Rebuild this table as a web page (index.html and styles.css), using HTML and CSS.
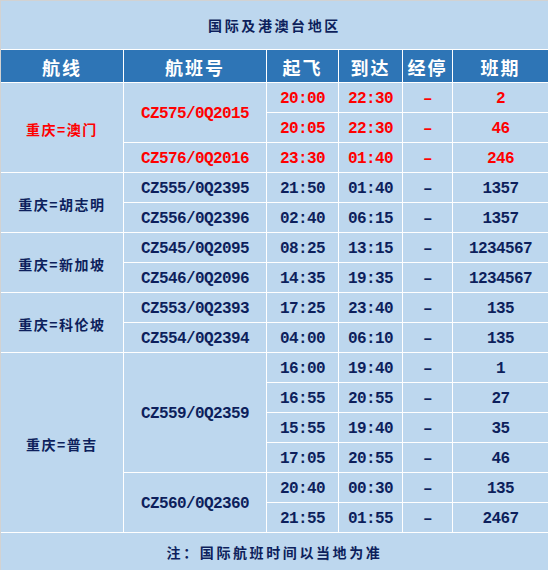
FILE: index.html
```html
<!DOCTYPE html>
<html lang="zh-CN">
<head>
<meta charset="utf-8">
<title>国际及港澳台地区</title>
<link rel="stylesheet" href="styles.css">
</head>
<body>
<div class="frame">
  <div class="sheet">
    <div class="title">国际及港澳台地区</div>

    <div class="hd">航线</div>
    <div class="hd">航班号</div>
    <div class="hd">起飞</div>
    <div class="hd">到达</div>
    <div class="hd">经停</div>
    <div class="hd">班期</div>

    <div class="route red span3">重庆=澳门</div>
    <div class="code red span2">CZ575/0Q2015</div>
    <div class="num red">20:00</div><div class="num red">22:30</div><div class="num red">–</div><div class="num red">2</div>
    <div class="num red">20:05</div><div class="num red">22:30</div><div class="num red">–</div><div class="num red">46</div>
    <div class="code red">CZ576/0Q2016</div>
    <div class="num red">23:30</div><div class="num red">01:40</div><div class="num red">–</div><div class="num red">246</div>

    <div class="route span2">重庆=胡志明</div>
    <div class="code">CZ555/0Q2395</div>
    <div class="num">21:50</div><div class="num">01:40</div><div class="num">–</div><div class="num">1357</div>
    <div class="code">CZ556/0Q2396</div>
    <div class="num">02:40</div><div class="num">06:15</div><div class="num">–</div><div class="num">1357</div>

    <div class="route span2">重庆=新加坡</div>
    <div class="code">CZ545/0Q2095</div>
    <div class="num">08:25</div><div class="num">13:15</div><div class="num">–</div><div class="num">1234567</div>
    <div class="code">CZ546/0Q2096</div>
    <div class="num">14:35</div><div class="num">19:35</div><div class="num">–</div><div class="num">1234567</div>

    <div class="route span2">重庆=科伦坡</div>
    <div class="code">CZ553/0Q2393</div>
    <div class="num">17:25</div><div class="num">23:40</div><div class="num">–</div><div class="num">135</div>
    <div class="code">CZ554/0Q2394</div>
    <div class="num">04:00</div><div class="num">06:10</div><div class="num">–</div><div class="num">135</div>

    <div class="route span6">重庆=普吉</div>
    <div class="code span4">CZ559/0Q2359</div>
    <div class="num">16:00</div><div class="num">19:40</div><div class="num">–</div><div class="num">1</div>
    <div class="num">16:55</div><div class="num">20:55</div><div class="num">–</div><div class="num">27</div>
    <div class="num">15:55</div><div class="num">19:40</div><div class="num">–</div><div class="num">35</div>
    <div class="num">17:05</div><div class="num">20:55</div><div class="num">–</div><div class="num">46</div>
    <div class="code span2">CZ560/0Q2360</div>
    <div class="num">20:40</div><div class="num">00:30</div><div class="num">–</div><div class="num">135</div>
    <div class="num">21:55</div><div class="num">01:55</div><div class="num">–</div><div class="num">2467</div>

    <div class="note">注：国际航班时间以当地为准</div>
  </div>
</div>
</body>
</html>
```

FILE: styles.css
```css
html, body {
  margin: 0;
  padding: 0;
  background: #bdd7ee;
}

.frame {
  width: 547px;
  height: 569px;
  border-left: 1px solid #d2d2d2;
  border-top: 1px solid #d2d2d2;
  overflow: hidden;
}

.sheet {
  display: grid;
  grid-template-columns: 122px 142px 71px 63px 49px 95px;
  grid-template-rows: 48px 32px repeat(15, 29px) 37px;
  gap: 1px;
  background: #ffffff;
  color: #0d1f5c;
  font-family: "Noto Sans CJK SC", "Liberation Sans", sans-serif;
}

.sheet > div {
  background: #bdd7ee;
  display: flex;
  align-items: center;
  justify-content: center;
  white-space: nowrap;
}

.title,
.note {
  grid-column: 1 / -1;
  font-size: 14px;
  font-weight: 700;
  letter-spacing: 2.6px;
  color: #0d1f5c;
}

.sheet > .hd {
  background: #2e75b6;
  color: #ffffff;
  font-size: 18px;
  font-weight: 700;
  letter-spacing: 2px;
  padding-top: 2px;
}

.route {
  font-size: 14px;
  font-weight: 700;
  letter-spacing: 1.5px;
  padding-top: 2px;
}

.code,
.num {
  font-family: "Liberation Mono", "DejaVu Sans Mono", monospace;
  font-size: 16px;
  font-weight: 700;
  letter-spacing: -0.6px;
  padding-top: 2px;
}

.red {
  color: #ff0000;
}

.span2 { grid-row: span 2; }
.span3 { grid-row: span 3; }
.span4 { grid-row: span 4; }
.span6 { grid-row: span 6; }
```
